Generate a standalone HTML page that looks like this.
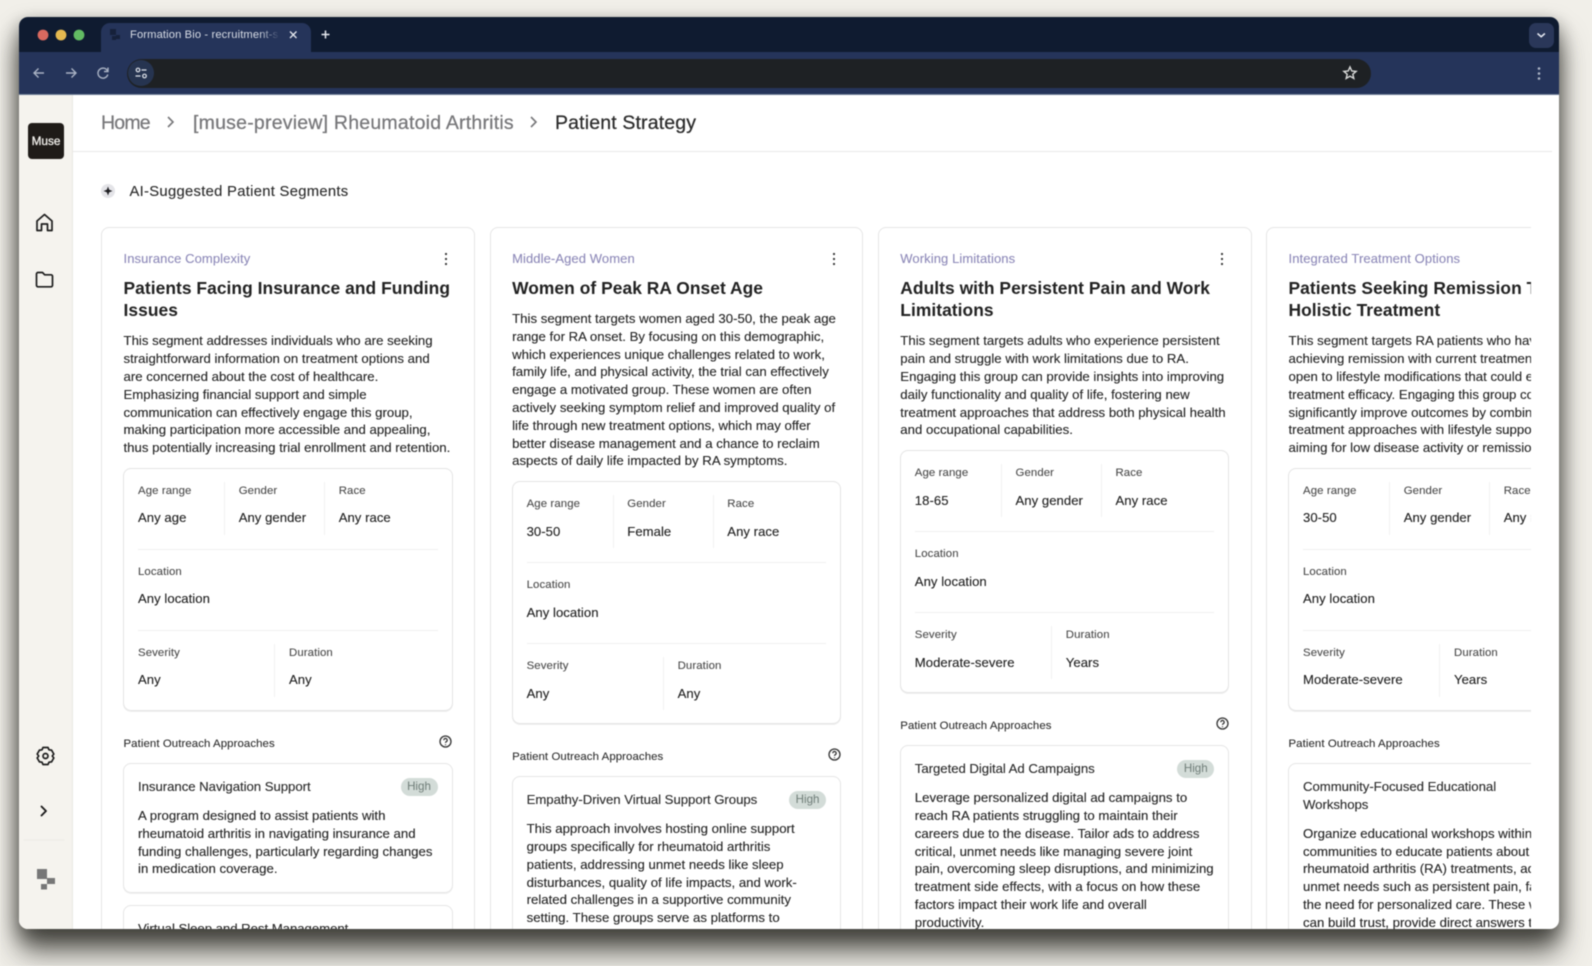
<!DOCTYPE html>
<html><head><meta charset="utf-8"><title>Patient Strategy</title>
<style>
*{box-sizing:border-box}
html,body{margin:0;padding:0;width:1592px;height:966px;overflow:hidden;background:#f1efe9;font-family:"Liberation Sans",sans-serif}
#blur{position:absolute;left:0;top:0;width:1592px;height:966px;overflow:hidden;filter:blur(.4px)}
#win{position:absolute;left:19px;top:17px;width:1540px;height:912px;border-radius:9px;overflow:hidden;background:#fff;box-shadow:0 22px 28px rgba(30,30,25,.72),0 7px 18px rgba(30,30,25,.5)}
#in{position:absolute;left:-19px;top:-17px;width:1592px;height:966px}
.a{position:absolute}
.nw{white-space:nowrap}
#tabs{position:absolute;left:19px;top:17px;width:1540px;height:35px;background:#0f1b30}
#tool{position:absolute;left:19px;top:52px;width:1540px;height:43px;background:#25345a;border-bottom:1px solid #6f7f98}
#addr{position:absolute;left:127px;top:59px;width:1244px;height:29px;border-radius:15px;background:#1e2124}
#tab{position:absolute;left:101px;top:23px;width:210px;height:29px;background:#25345a;border-radius:9px 9px 0 0}
#side{position:absolute;left:19px;top:95px;width:54px;height:834px;background:#f5f3ee;border-right:1px solid #e9e8e3}
#hl{position:absolute;left:73px;top:151px;width:1479px;height:1px;background:#e8e8e8}
.bc{position:absolute;top:111px;line-height:24px;font-size:19.5px;color:#77777a;white-space:nowrap;letter-spacing:.22px;-webkit-text-stroke:.25px currentColor}
#clip{position:absolute;left:95px;top:220px;width:1435.5px;height:709px;overflow:hidden}
.card{position:absolute;top:7px;width:373.9px;height:900px;border:1px solid #e6e6e6;border-radius:8px;background:#fff;padding:49px 0 0 21.5px}
.eb{position:absolute;left:21.5px;top:21px;line-height:20px;font-size:13px;color:#8d89b8;white-space:nowrap;letter-spacing:.09px;-webkit-text-stroke:.1px currentColor}
.menu{position:absolute;left:339.5px;top:23px}
.t{font-size:17.4px;font-weight:700;line-height:22.4px;color:#222;letter-spacing:.05px;white-space:nowrap;margin-bottom:10.6px}
.b{font-size:13.2px;line-height:17.8px;color:#262626;white-space:nowrap;letter-spacing:.01px;margin-bottom:11.3px;-webkit-text-stroke:.12px currentColor}
.box{position:relative;width:329.5px;margin-left:-.5px;height:243px;border:1px solid #e4e4e4;border-radius:8px;box-shadow:0 1px 0 #efefef}
.l,.v{position:absolute;white-space:nowrap;line-height:16px}
.l{font-size:11.4px;color:#4a4a4a;letter-spacing:.1px;-webkit-text-stroke:.1px currentColor}
.v{font-size:13.1px;color:#222;letter-spacing:.05px;-webkit-text-stroke:.12px currentColor}
.c1{left:14px}.c2{left:114.7px}.c3{left:214.7px}.c4{left:165px}
.r1{top:14px}.r2{top:41.2px}.r3{top:95px}.r4{top:122.2px}.r5{top:176px}.r6{top:203.2px}
.hs{position:absolute;left:14px;width:299.5px;height:1px;background:#f0f0f0}
.vs{position:absolute;width:1px;background:#f2f2f2}
.oh{position:relative;margin-top:22px;height:20px;line-height:22.5px;font-size:11.4px;color:#2e2e2e;white-space:nowrap;letter-spacing:.09px;margin-bottom:10px;width:328.5px;-webkit-text-stroke:.1px currentColor}
.oh svg{position:absolute;right:0;top:2px}
.ob{position:relative;width:329.5px;margin-left:-.5px;border:1px solid #e6e6e6;border-radius:8px;padding:14px 14px 14px;margin-bottom:12px;box-shadow:0 1px 0 #f0f0f0}
.ot{font-size:13.2px;line-height:17.8px;color:#2b2b2b;white-space:nowrap;letter-spacing:-.04px;margin-bottom:11px;-webkit-text-stroke:.12px currentColor}
.ob .b{margin:0}
.pill{position:absolute;right:14px;top:13.5px;width:37px;height:18px;border-radius:9px;background:#d3dcd8;color:#6f7d78;font-size:11.6px;line-height:18.5px;text-align:center}
</style></head><body>
<div id="blur">
<div id="win"><div id="in">
<div id="tabs"></div><div id="tool"></div><div id="addr"></div><div id="tab"></div>

<svg class="a" style="left:0;top:0" width="1592" height="100" fill="none">
<circle cx="43" cy="35" r="5.4" fill="#d9695f"/><circle cx="61" cy="35" r="5.4" fill="#e5b950"/><circle cx="79" cy="35" r="5.4" fill="#62bb63"/>
<g fill="#16213a"><rect x="110" y="29" width="6" height="6"/><rect x="116" y="35" width="4" height="4"/><rect x="112" y="36" width="4" height="4"/></g>
<path d="M290 31.500l6.500 6.500m0-6.500l-6.500 6.500" stroke="#e6e9ef" stroke-width="1.300"/>
<path d="M325.500 30.500v8m-4-4h8" stroke="#e6e9ef" stroke-width="1.500"/>
<path d="M44 73H34.500m4-4.500L34 73l4.500 4.500" stroke="#a9b2c4" stroke-width="1.400"/>
<path d="M66 73h9.500m-4-4.500L76 73l-4.500 4.500" stroke="#a9b2c4" stroke-width="1.400"/>
<path d="M107.500 71a5 5 0 1 0 .3 3.500M108 67.500V71.500h-4" stroke="#a9b2c4" stroke-width="1.400"/>
<circle cx="141" cy="73" r="13" fill="#263450"/>
<circle cx="138" cy="70" r="1.800" stroke="#dfe3ea" stroke-width="1.200"/><path d="M141.500 70h5M135.500 76h5" stroke="#dfe3ea" stroke-width="1.200"/><circle cx="144.500" cy="76" r="1.800" stroke="#dfe3ea" stroke-width="1.200"/>
<path d="M1350 67l1.800 4 4.300.4-3.300 2.800 1 4.200-3.800-2.200-3.800 2.200 1-4.200-3.300-2.800 4.300-.4z" stroke="#d9dad9" stroke-width="1.400"/>
<rect x="1529" y="23" width="25" height="25" rx="7" fill="#2a3759"/>
<path d="M1537.500 33.500l3.700 3.200 3.700-3.200" stroke="#e6e9f2" stroke-width="1.500"/>
<g fill="#aeb6c8"><circle cx="1539" cy="68.500" r="1.300"/><circle cx="1539" cy="73.500" r="1.300"/><circle cx="1539" cy="78.500" r="1.300"/></g>
</svg>
<div class="a nw" style="left:130px;top:27px;width:150px;overflow:hidden;line-height:16px;font-size:11.200px;color:#d8dde6;letter-spacing:.12px;-webkit-mask-image:linear-gradient(90deg,#000 86%,transparent 100%);mask-image:linear-gradient(90deg,#000 86%,transparent 100%)">Formation Bio - recruitment-s</div>

<div id="side"></div>
<div class="a" style="left:28px;top:123px;width:36px;height:36px;border-radius:4px;background:#1f1b18;color:#f2f0ec;font-size:11.800px;-webkit-text-stroke:.3px #f2f0ec;line-height:36px;text-align:center">Muse</div>
<svg class="a" style="left:0;top:200px" width="73" height="700" fill="none" stroke="#1d1d1d" stroke-width="1.700" stroke-linejoin="round" stroke-linecap="round">
<path d="M37 21l7.500-6.500L52 21v9.500h-4.500V24h-6v6.500H37z"/>
<path d="M36.500 74a1.500 1.500 0 0 1 1.500-1.500h4.500l2.200 2.300H51a1.500 1.500 0 0 1 1.500 1.500v9a1.500 1.500 0 0 1-1.500 1.500H38a1.500 1.500 0 0 1-1.500-1.500z"/>
<path d="M43 547.500h5l1 2.300 2.500.3 2.300 3.900-1.500 2 1.500 2-2.300 3.900-2.500.3-1 2.300h-5l-1-2.300-2.500-.3-2.300-3.900 1.500-2-1.500-2 2.300-3.900 2.500-.3z"/>
<circle cx="45.500" cy="556" r="2.500"/>
<path d="M41.500 606.500l4.500 4.500-4.500 4.500" stroke-width="1.900"/>
<path d="M24 640h40" stroke="#ecebe6" stroke-width="1"/>
<g fill="#777" stroke="none"><rect x="37" y="669" width="10" height="10"/><rect x="47" y="678" width="8" height="6"/><rect x="41" y="684" width="6" height="5.500"/></g>
</svg>

<div class="bc" style="left:101px;letter-spacing:-.8px">Home</div>
<svg class="a" style="left:165px;top:115px" width="12" height="14" fill="none" stroke="#77777a" stroke-width="1.600"><path d="M3 2l5 5-5 5"/></svg>
<div class="bc" style="left:193px">[muse-preview] Rheumatoid Arthritis</div>
<svg class="a" style="left:528px;top:115px" width="12" height="14" fill="none" stroke="#77777a" stroke-width="1.600"><path d="M3 2l5 5-5 5"/></svg>
<div class="bc" style="left:555px;color:#2b2b2b;letter-spacing:.15px">Patient Strategy</div>
<div id="hl"></div>

<svg class="a" style="left:101px;top:184px" width="14" height="14"><circle cx="7" cy="7" r="7" fill="#e4e4e8"/><path d="M7 2.500L8.200 5.800 11.500 7 8.200 8.200 7 11.500 5.800 8.200 2.500 7 5.800 5.800z" fill="#1e1e22"/></svg>
<div class="a nw" style="left:129.500px;top:181.500px;line-height:20px;font-size:14.800px;color:#2c2c2c;letter-spacing:.29px;-webkit-text-stroke:.12px currentColor">AI-Suggested Patient Segments</div>

<div id="clip">
<!-- CARD 1 -->
<div class="card" style="left:6px">
<div class="eb">Insurance Complexity</div>
<svg class="menu" width="8" height="16" fill="#333"><circle cx="4" cy="3" r="1.100"/><circle cx="4" cy="8" r="1.100"/><circle cx="4" cy="13" r="1.100"/></svg>
<div class="t">Patients Facing Insurance and Funding<br>Issues</div>
<div class="b">This segment addresses individuals who are seeking<br>straightforward information on treatment options and<br>are concerned about the cost of healthcare.<br>Emphasizing financial support and simple<br>communication can effectively engage this group,<br>making participation more accessible and appealing,<br>thus potentially increasing trial enrollment and retention.</div>
<div class="box">
<div class="l c1 r1">Age range</div><div class="v c1 r2">Any age</div>
<div class="vs" style="left:100px;top:13px;height:53px"></div>
<div class="l c2 r1">Gender</div><div class="v c2 r2">Any gender</div>
<div class="vs" style="left:200px;top:13px;height:53px"></div>
<div class="l c3 r1">Race</div><div class="v c3 r2">Any race</div>
<div class="hs" style="top:80px"></div>
<div class="l c1 r3">Location</div><div class="v c1 r4">Any location</div>
<div class="hs" style="top:161px"></div>
<div class="l c1 r5">Severity</div><div class="v c1 r6">Any</div>
<div class="vs" style="left:150px;top:175px;height:53px"></div>
<div class="l c4 r5">Duration</div><div class="v c4 r6">Any</div>
</div>
<div class="oh">Patient Outreach Approaches<svg width="13" height="13" fill="none" stroke="#333" stroke-width="1.300"><circle cx="6.500" cy="6.500" r="5.500"/><path d="M4.800 5.200a1.700 1.700 0 1 1 2.600 1.400c-.6.400-.9.700-.9 1.300"/><path d="M6.500 9.300v.8"/></svg></div>
<div class="ob"><div class="pill">High</div><div class="ot">Insurance Navigation Support</div><div class="b">A program designed to assist patients with<br>rheumatoid arthritis in navigating insurance and<br>funding challenges, particularly regarding changes<br>in medication coverage.</div></div>
<div class="ob"><div class="ot">Virtual Sleep and Rest Management</div></div>
</div>

<!-- CARD 2 -->
<div class="card" style="left:394.600px">
<div class="eb">Middle-Aged Women</div>
<svg class="menu" width="8" height="16" fill="#333"><circle cx="4" cy="3" r="1.100"/><circle cx="4" cy="8" r="1.100"/><circle cx="4" cy="13" r="1.100"/></svg>
<div class="t">Women of Peak RA Onset Age</div>
<div class="b">This segment targets women aged 30-50, the peak age<br>range for RA onset. By focusing on this demographic,<br>which experiences unique challenges related to work,<br>family life, and physical activity, the trial can effectively<br>engage a motivated group. These women are often<br>actively seeking symptom relief and improved quality of<br>life through new treatment options, which may offer<br>better disease management and a chance to reclaim<br>aspects of daily life impacted by RA symptoms.</div>
<div class="box">
<div class="l c1 r1">Age range</div><div class="v c1 r2">30-50</div>
<div class="vs" style="left:100px;top:13px;height:53px"></div>
<div class="l c2 r1">Gender</div><div class="v c2 r2">Female</div>
<div class="vs" style="left:200px;top:13px;height:53px"></div>
<div class="l c3 r1">Race</div><div class="v c3 r2">Any race</div>
<div class="hs" style="top:80px"></div>
<div class="l c1 r3">Location</div><div class="v c1 r4">Any location</div>
<div class="hs" style="top:161px"></div>
<div class="l c1 r5">Severity</div><div class="v c1 r6">Any</div>
<div class="vs" style="left:150px;top:175px;height:53px"></div>
<div class="l c4 r5">Duration</div><div class="v c4 r6">Any</div>
</div>
<div class="oh">Patient Outreach Approaches<svg width="13" height="13" fill="none" stroke="#333" stroke-width="1.300"><circle cx="6.500" cy="6.500" r="5.500"/><path d="M4.800 5.200a1.700 1.700 0 1 1 2.600 1.400c-.6.400-.9.700-.9 1.300"/><path d="M6.500 9.300v.8"/></svg></div>
<div class="ob"><div class="pill">High</div><div class="ot">Empathy-Driven Virtual Support Groups</div><div class="b">This approach involves hosting online support<br>groups specifically for rheumatoid arthritis<br>patients, addressing unmet needs like sleep<br>disturbances, quality of life impacts, and work-<br>related challenges in a supportive community<br>setting. These groups serve as platforms to</div></div>
</div>

<!-- CARD 3 -->
<div class="card" style="left:782.800px">
<div class="eb">Working Limitations</div>
<svg class="menu" width="8" height="16" fill="#333"><circle cx="4" cy="3" r="1.100"/><circle cx="4" cy="8" r="1.100"/><circle cx="4" cy="13" r="1.100"/></svg>
<div class="t">Adults with Persistent Pain and Work<br>Limitations</div>
<div class="b">This segment targets adults who experience persistent<br>pain and struggle with work limitations due to RA.<br>Engaging this group can provide insights into improving<br>daily functionality and quality of life, fostering new<br>treatment approaches that address both physical health<br>and occupational capabilities.</div>
<div class="box">
<div class="l c1 r1">Age range</div><div class="v c1 r2">18-65</div>
<div class="vs" style="left:100px;top:13px;height:53px"></div>
<div class="l c2 r1">Gender</div><div class="v c2 r2">Any gender</div>
<div class="vs" style="left:200px;top:13px;height:53px"></div>
<div class="l c3 r1">Race</div><div class="v c3 r2">Any race</div>
<div class="hs" style="top:80px"></div>
<div class="l c1 r3">Location</div><div class="v c1 r4">Any location</div>
<div class="hs" style="top:161px"></div>
<div class="l c1 r5">Severity</div><div class="v c1 r6">Moderate-severe</div>
<div class="vs" style="left:150px;top:175px;height:53px"></div>
<div class="l c4 r5">Duration</div><div class="v c4 r6">Years</div>
</div>
<div class="oh">Patient Outreach Approaches<svg width="13" height="13" fill="none" stroke="#333" stroke-width="1.300"><circle cx="6.500" cy="6.500" r="5.500"/><path d="M4.800 5.200a1.700 1.700 0 1 1 2.600 1.400c-.6.400-.9.700-.9 1.300"/><path d="M6.500 9.300v.8"/></svg></div>
<div class="ob"><div class="pill">High</div><div class="ot">Targeted Digital Ad Campaigns</div><div class="b">Leverage personalized digital ad campaigns to<br>reach RA patients struggling to maintain their<br>careers due to the disease. Tailor ads to address<br>critical, unmet needs like managing severe joint<br>pain, overcoming sleep disruptions, and minimizing<br>treatment side effects, with a focus on how these<br>factors impact their work life and overall<br>productivity.</div></div>
</div>

<!-- CARD 4 -->
<div class="card" style="left:1171px">
<div class="eb">Integrated Treatment Options</div>
<div class="t">Patients Seeking Remission Through<br>Holistic Treatment</div>
<div class="b">This segment targets RA patients who have not<br>achieving remission with current treatments and are<br>open to lifestyle modifications that could enhance<br>treatment efficacy. Engaging this group could<br>significantly improve outcomes by combining<br>treatment approaches with lifestyle support,<br>aiming for low disease activity or remission.</div>
<div class="box">
<div class="l c1 r1">Age range</div><div class="v c1 r2">30-50</div>
<div class="vs" style="left:100px;top:13px;height:53px"></div>
<div class="l c2 r1">Gender</div><div class="v c2 r2">Any gender</div>
<div class="vs" style="left:200px;top:13px;height:53px"></div>
<div class="l c3 r1">Race</div><div class="v c3 r2">Any race</div>
<div class="hs" style="top:80px"></div>
<div class="l c1 r3">Location</div><div class="v c1 r4">Any location</div>
<div class="hs" style="top:161px"></div>
<div class="l c1 r5">Severity</div><div class="v c1 r6">Moderate-severe</div>
<div class="vs" style="left:150px;top:175px;height:53px"></div>
<div class="l c4 r5">Duration</div><div class="v c4 r6">Years</div>
</div>
<div class="oh">Patient Outreach Approaches</div>
<div class="ob"><div class="ot">Community-Focused Educational<br>Workshops</div><div class="b">Organize educational workshops within<br>communities to educate patients about<br>rheumatoid arthritis (RA) treatments, addressing<br>unmet needs such as persistent pain, fatigue, and<br>the need for personalized care. These workshops<br>can build trust, provide direct answers to</div></div>
</div>
</div>

</div></div>
</div>
</body></html>
